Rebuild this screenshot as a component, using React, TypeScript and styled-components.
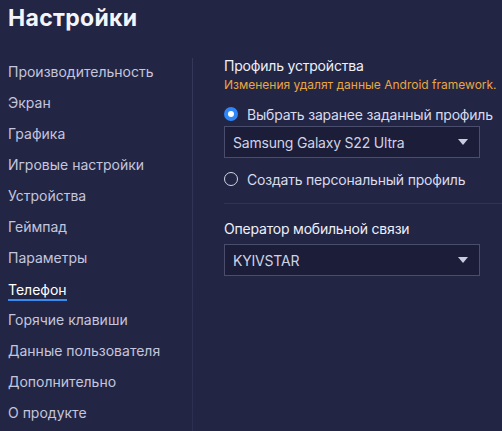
import React from "react";
import styled, { createGlobalStyle } from "styled-components";

const Global = createGlobalStyle`
  html, body { margin: 0; padding: 0; background: #232545; }
  body { font-family: Inter, "Noto Sans", sans-serif; }
`;

const Page = styled.div`
  width: 502px;
  height: 431px;
  background: #232545;
  color: #e6e8f4;
  overflow: hidden;
  display: flex;
  flex-direction: column;
`;

const Title = styled.h1`
  margin: 0;
  padding: 4px 0 0 8px;
  height: 52px;
  box-sizing: border-box;
  font-size: 23px;
  font-weight: 700;
  color: #f4f5fb;
  letter-spacing: 0.3px;
`;

const Body = styled.div`
  display: flex;
  flex: 1;
`;

const Sidebar = styled.nav`
  width: 193px;
  padding-top: 5px;
  display: flex;
  flex-direction: column;
  box-sizing: border-box;
  position: relative;
  &::after {
    content: "";
    position: absolute;
    right: 0;
    top: 6px;
    bottom: 0;
    width: 1px;
    background: linear-gradient(#35385b, #2c2f52);
  }
`;

const NavItem = styled.div<{ $active?: boolean }>`
  height: 31px;
  display: flex;
  align-items: center;
  padding-left: 8px;
  font-size: 14px;
  color: ${(p) => (p.$active ? "#ffffff" : "#c3c6dc")};
`;

const NavLabel = styled.span<{ $active?: boolean }>`
  padding-bottom: 1px;
  border-bottom: 2px solid ${(p) => (p.$active ? "#3a8bf0" : "transparent")};
  line-height: 17px;
  margin-top: ${(p) => (p.$active ? "3px" : "0")};
`;

const Content = styled.section`
  flex: 1;
  padding: 4px 0 0 31px;
  display: flex;
  flex-direction: column;
  letter-spacing: -0.2px;
  white-space: nowrap;
`;

const Group = styled.div`
  display: flex;
  flex-direction: column;
`;

const Spacer = styled.div<{ $h: number }>`
  height: ${(p) => p.$h}px;
  flex: none;
`;

const Heading = styled.div`
  font-size: 14px;
  color: #eef0f8;
  height: 19px;
  line-height: 19px;
`;

const Warning = styled.div`
  font-size: 12px;
  color: #eaa641;
  height: 17px;
  line-height: 17px;
  margin-top: 1px;
  letter-spacing: 0;
`;

const RadioRow = styled.label`
  display: flex;
  align-items: center;
  gap: 9px;
  height: 24px;
  font-size: 14px;
  color: #d8dbeb;
`;

const RadioDot = styled.span<{ $checked?: boolean }>`
  width: 14px;
  height: 14px;
  flex: none;
  border-radius: 50%;
  box-sizing: border-box;
  display: inline-flex;
  align-items: center;
  justify-content: center;
  ${(p) =>
    p.$checked
      ? `background: #2f86f6; border: none;`
      : `border: 1.5px solid #d4d6e4; background: transparent;`}
  &::after {
    content: "";
    width: 6px;
    height: 6px;
    border-radius: 50%;
    background: ${(p) => (p.$checked ? "#ffffff" : "transparent")};
  }
`;

const Select = styled.div`
  height: 32px;
  box-sizing: border-box;
  border: 1px solid #4a4d6c;
  background: #1c1d39;
  display: flex;
  align-items: center;
  justify-content: space-between;
  padding: 0 11px 0 8px;
  font-size: 14px;
  color: #cfd2e4;
  width: 256px;
`;

const Arrow = styled.span`
  width: 0;
  height: 0;
  border-left: 5px solid transparent;
  border-right: 5px solid transparent;
  border-top: 6px solid #c9cce0;
`;

const Separator = styled.hr`
  border: none;
  border-top: 1px solid #303356;
  margin: 12px 0 0 0;
  width: 100%;
`;

const items = [
  "Производительность",
  "Экран",
  "Графика",
  "Игровые настройки",
  "Устройства",
  "Геймпад",
  "Параметры",
  "Телефон",
  "Горячие клавиши",
  "Данные пользователя",
  "Дополнительно",
  "О продукте",
];

export default function App() {
  return (
    <Page>
      <Global />
      <Title>Настройки</Title>
      <Body>
        <Sidebar>
          {items.map((t) => (
            <NavItem key={t} $active={t === "Телефон"}>
              <NavLabel $active={t === "Телефон"}>{t}</NavLabel>
            </NavItem>
          ))}
        </Sidebar>
        <Content>
          <Group>
            <Heading>Профиль устройства</Heading>
            <Warning>Изменения удалят данные Android framework.</Warning>
            <Spacer $h={9} />
            <RadioRow>
              <RadioDot $checked />
              Выбрать заранее заданный профиль
            </RadioRow>
            <Select>
              Samsung Galaxy S22 Ultra
              <Arrow />
            </Select>
            <Spacer $h={9} />
            <RadioRow>
              <RadioDot />
              Создать персональный профиль
            </RadioRow>
          </Group>
          <Separator />
          <Group>
            <Spacer $h={15} />
            <Heading>Оператор мобильной связи</Heading>
            <Spacer $h={6} />
            <Select>
              KYIVSTAR
              <Arrow />
            </Select>
          </Group>
        </Content>
      </Body>
    </Page>
  );
}
